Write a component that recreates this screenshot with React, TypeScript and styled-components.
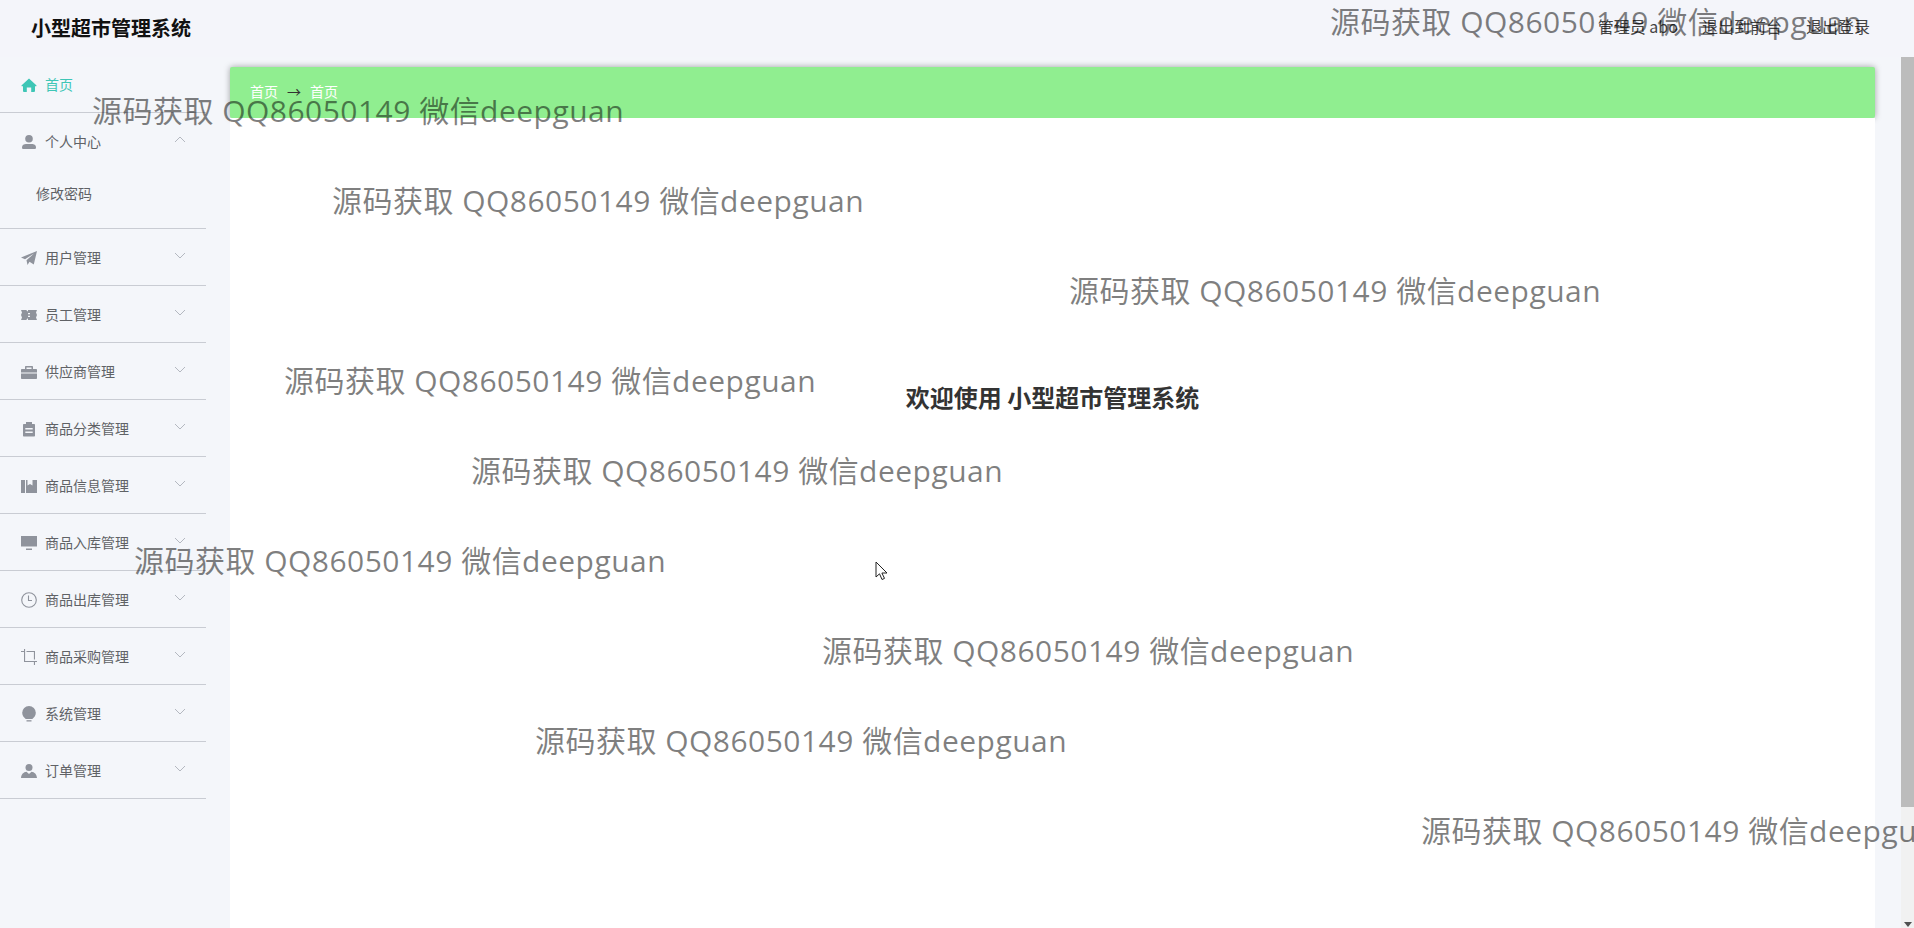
import React from 'react';
import styled, { createGlobalStyle } from 'styled-components';

const GlobalStyle = createGlobalStyle`
	html, body {
		margin: 0;
		height: 100%;
		overflow: hidden;
		background: #f4f6fa;
		font-family: "Noto Sans CJK SC", "Noto Sans", sans-serif;
	}
`;

const Page = styled.div`
	position: relative;
	display: flex;
	flex-direction: column;
	width: 1914px;
	height: 928px;
	overflow: hidden;
`;

const Header = styled.header`
	display: flex;
	align-items: center;
	justify-content: space-between;
	flex: 0 0 57px;
	padding: 0 44px 2px 31px;
	box-sizing: border-box;
	background: #f4f5fa;
`;

const Title = styled.h1`
	margin: 0;
	font-size: 20px;
	font-weight: 700;
	color: #111;
`;

const HeaderLinks = styled.div`
	display: flex;
	gap: 24px;
	padding-bottom: 3px;
	font-size: 16px;
	color: #444;
`;

const Body = styled.div`
	display: flex;
	flex: 1;
	min-height: 0;
`;

const Sidebar = styled.nav`
	flex: 0 0 206px;
	margin-top: -1px;
`;

const MenuRow = styled.div<{ $active?: boolean }>`
	display: flex;
	align-items: center;
	height: 56px;
	padding-left: 21px;
	border-bottom: 1px solid #c9ccd3;
	font-size: 14px;
	color: ${(p) => (p.$active ? '#3ec6b6' : '#606266')};
`;

const MenuGroup = styled.div`
	border-bottom: 1px solid #c9ccd3;
`;

const GroupTitle = styled.div`
	display: flex;
	align-items: center;
	height: 56px;
	padding-left: 21px;
	font-size: 14px;
	color: #606266;
`;

const SubItem = styled.div`
	display: flex;
	align-items: center;
	height: 59px;
	padding: 0 0 11px 36px;
	box-sizing: border-box;
	font-size: 14px;
	color: #606266;
`;

const IconBox = styled.span`
	display: flex;
	flex: 0 0 16px;
	margin: 2px 8px 0 0;
	color: #8f939c;
	${MenuRow} & {
		color: inherit;
	}
`;

const Label = styled.span`
	flex: 1;
`;

const Chevron = styled.svg`
	flex: 0 0 12px;
	margin: -3px 20px 0 0;
	fill: none;
	stroke: #b4b8c0;
	stroke-width: 1;
`;

const Main = styled.main`
	display: flex;
	flex: 1;
	flex-direction: column;
	min-width: 0;
	padding: 10px 26px 0 24px;
`;

const Crumbs = styled.div`
	display: flex;
	align-items: center;
	flex: 0 0 51px;
	gap: 9px;
	padding: 0 0 3px 20px;
	box-sizing: border-box;
	background: #90ee90;
	border-radius: 2px;
	box-shadow: 0 0 6px rgba(0, 0, 0, 0.35);
	font-size: 14px;
	color: #fff;
`;

const CrumbArrow = styled.span`
	color: #333;
`;

const Panel = styled.section`
	flex: 1;
	padding-top: 261px;
	background: #fff;
	text-align: center;
`;

const Welcome = styled.div`
	font-size: 24px;
	font-weight: 700;
	line-height: 36px;
	color: #333;
`;

const Scrollbar = styled.div`
	display: flex;
	flex: 0 0 13px;
	flex-direction: column;
	align-items: center;
	background: #f1f1f1;
`;

const Thumb = styled.div`
	flex: 0 0 750px;
	align-self: stretch;
	background: #bcbcbc;
`;

const ArrowDown = styled.div`
	margin-top: auto;
	margin-bottom: 1px;
	border-style: solid;
	border-width: 5px 4px 0;
	border-color: #505050 transparent transparent;
`;

const Watermark = styled.div<{ $x: number; $y: number }>`
	position: absolute;
	left: ${(p) => p.$x}px;
	top: ${(p) => p.$y - 20}px;
	font-family: "Open Sans", "Noto Sans CJK SC", sans-serif;
	font-size: 30px;
	font-weight: 400;
	line-height: 40px;
	letter-spacing: 0.48px;
	white-space: nowrap;
	color: rgba(0, 0, 0, 0.5);
	pointer-events: none;
`;

const Cursor = styled.svg`
	position: absolute;
	left: 875px;
	top: 561px;
`;

const icons: Record<string, React.ReactNode> = {
	home: <path d="M8 1.500 15.300 8.200c.4.4.2 1-.3 1H14V14c0 .5-.4.9-.9.9H10.200V10.500H5.800V14.900H2.900c-.5 0-.9-.4-.9-.9V9.200H1c-.5 0-.7-.6-.3-1Z" />,
	user: (
		<>
			<circle cx="8" cy="4.800" r="3.800" />
			<path d="M1 13.500C1 10.800 3.200 10 5 10h6c1.800 0 4 .8 4 3.500 0 1-.6 1.500-1.500 1.500h-11C1.600 15 1 14.500 1 13.500Z" />
		</>
	),
	plane: <path d="M16 1 12.800 14.500 8.500 11.800 6.500 15 5.500 10.300 13 3.500 4 9.300 0 7.500Z" />,
	ticket: <path d="M0 3h5.500c.3 1 .8 1.400 1.500 1.400V3H16l-1 2.500L16 8l-1 2.500 1 2.500H7v-1.400c-.7 0-1.200.4-1.500 1.400H0l1-2.500L0 8l1-2.500ZM7 6v1.300h2V6Zm0 2.700V10h2V8.700Z" />,
	case: <path d="M5 2h6c.6 0 1 .4 1 1v2h3c.6 0 1 .4 1 1v2.500H0V6c0-.6.4-1 1-1h3V3c0-.6.4-1 1-1Zm.5 1.400V5h5V3.400ZM0 9.500h16V14c0 .6-.4 1-1 1H1c-.6 0-1-.4-1-1Z" />,
	clip: <path fillRule="evenodd" d="M5 1h6v2h2c.6 0 1 .4 1 1v10.500c0 .6-.4 1-1 1H3c-.6 0-1-.4-1-1V4c0-.6.4-1 1-1h2Zm-.700 6v1.500h7.400V7Zm0 3.500V12h7.400v-1.500Z" />,
	books: <path d="M0 2h4v13H0ZM5 2h1.500v5.500L9 6l2.500 1.500V2H16v13H5Z" />,
	screen: <path d="M0 1h16v10.500H0ZM5 13.500h6v1.500H5Z" />,
	clock: (
		<>
			<circle cx="8" cy="8" r="7.300" fill="none" stroke="currentColor" strokeWidth="1.100" />
			<path d="M7.500 3.500V8.500H11" fill="none" stroke="currentColor" strokeWidth="1.100" />
		</>
	),
	crop: <path d="M3 0h1.100v12H16v1.100h-2V16h-1.100v-2.900H3V3.100H0V2h3ZM5.500 2H14v8.500h-1.100V3.100H5.500Z" />,
	bulb: (
		<>
			<path d="M8 0a6.800 6.800 0 0 1 6.800 6.800c0 2.800-1.800 4.800-3.500 6.300H4.700C3 11.600 1.200 9.600 1.200 6.800A6.800 6.800 0 0 1 8 0Z" />
			<path d="M5.500 14.200h5V15.500h-5Z" />
		</>
	),
	people: (
		<>
			<circle cx="8" cy="4.500" r="3.500" />
			<path d="M0 15c.3-3.500 2.500-6 5.500-6.200L8 11l2.500-2.200c3 .2 5.200 2.700 5.500 6.200Z" />
		</>
	),
};

const Icon = ({ name }: { name: string }) => (
	<IconBox>
		<svg width="16" height="16" viewBox="0 0 16 16" fill="currentColor">
			{icons[name]}
		</svg>
	</IconBox>
);

const menus = [
	{ label: '用户管理', icon: 'plane' },
	{ label: '员工管理', icon: 'ticket' },
	{ label: '供应商管理', icon: 'case' },
	{ label: '商品分类管理', icon: 'clip' },
	{ label: '商品信息管理', icon: 'books' },
	{ label: '商品入库管理', icon: 'screen' },
	{ label: '商品出库管理', icon: 'clock' },
	{ label: '商品采购管理', icon: 'crop' },
	{ label: '系统管理', icon: 'bulb' },
	{ label: '订单管理', icon: 'people' },
];

const marks = [
	[1330, 22],
	[92, 111],
	[332, 201],
	[1069, 291],
	[284, 381],
	[471, 471],
	[134, 561],
	[822, 651],
	[535, 741],
	[1421, 831],
];

const App = () => {
	return (
		<Page>
			<GlobalStyle />
			<Header>
				<Title>小型超市管理系统</Title>
				<HeaderLinks>
					<span>管理员 abo</span>
					<span>退出到前台</span>
					<span>退出登录</span>
				</HeaderLinks>
			</Header>
			<Body>
				<Sidebar>
					<MenuRow $active>
						<Icon name="home" />
						<Label>首页</Label>
					</MenuRow>
					<MenuGroup>
						<GroupTitle>
							<Icon name="user" />
							<Label>个人中心</Label>
							<Chevron width="12" height="7" viewBox="0 0 12 7">
								<polyline points="1,6 6,1 11,6" />
							</Chevron>
						</GroupTitle>
						<SubItem>修改密码</SubItem>
					</MenuGroup>
					{menus.map((m) => (
						<MenuGroup key={m.label}>
							<GroupTitle>
								<Icon name={m.icon} />
								<Label>{m.label}</Label>
								<Chevron width="12" height="7" viewBox="0 0 12 7">
									<polyline points="1,1 6,6 11,1" />
								</Chevron>
							</GroupTitle>
						</MenuGroup>
					))}
				</Sidebar>
				<Main>
					<Crumbs>
						<span>首页</span>
						<CrumbArrow>→</CrumbArrow>
						<span>首页</span>
					</Crumbs>
					<Panel>
						<Welcome>欢迎使用 小型超市管理系统</Welcome>
					</Panel>
				</Main>
				<Scrollbar>
					<Thumb />
					<ArrowDown />
				</Scrollbar>
			</Body>
			{marks.map(([x, y]) => (
				<Watermark key={y} $x={x} $y={y}>
					源码获取 QQ86050149 微信deepguan
				</Watermark>
			))}
			<Cursor width="13" height="21" viewBox="0 0 13 21">
				<path d="M1 1v15l3.500-3.200L7 18.500l2.500-1.100-2.600-5.400H12Z" fill="#fff" stroke="#222" strokeWidth="1" />
			</Cursor>
		</Page>
	);
};

export default App;
